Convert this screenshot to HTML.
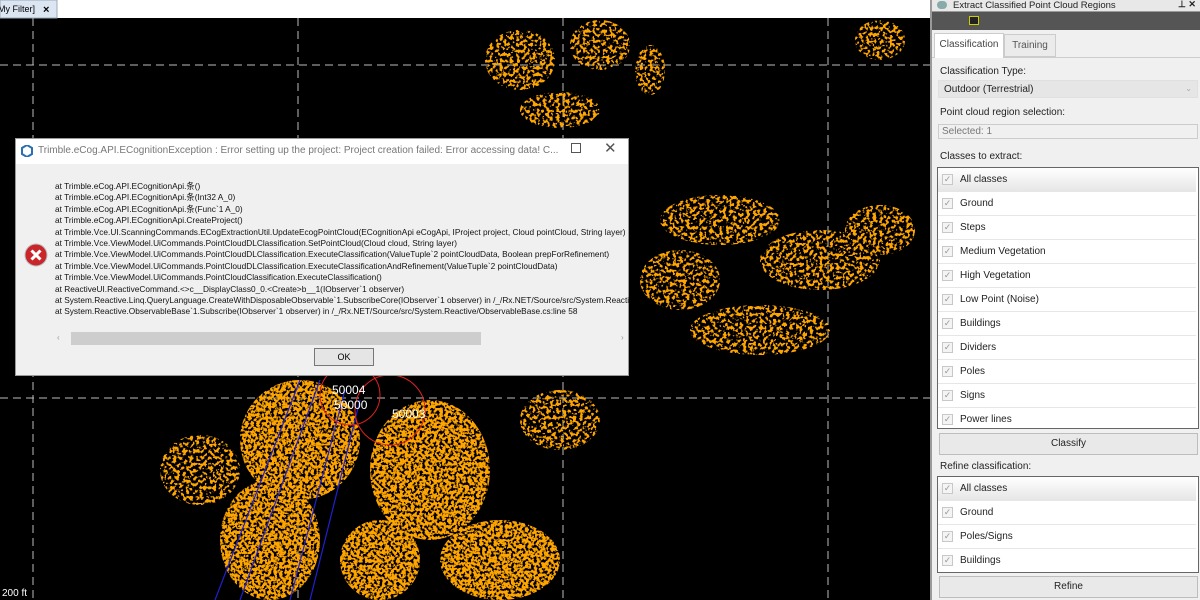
<!DOCTYPE html>
<html><head><meta charset="utf-8"><style>
*{margin:0;padding:0;box-sizing:border-box}
body{width:1200px;height:600px;overflow:hidden;background:#000;font-family:"Liberation Sans",sans-serif;position:relative}
.abs{position:absolute}
.panel{left:930px;top:0;width:270px;height:600px;background:#f0f0f0;border-left:2px solid #9a9a9a;font-size:10px;color:#222}
.row{position:absolute;left:0;width:258px;height:24px;border-bottom:1px solid #e6e6e6;background:#fff}
.row .cb{position:absolute;left:4px;top:6px;width:11px;height:11px;border:1px solid #c8c8c8;background:#f4f4f4;color:#999;font-size:9px;line-height:9px;text-align:center}
.row span{position:absolute;left:22px;top:6px}
.btn{position:absolute;left:7px;width:259px;height:22px;border:1px solid #bdbdbd;background:#e9e9e9;text-align:center;line-height:20px}
.dlg{left:15px;top:138px;width:614px;height:238px;background:#f0f0f0;border:1px solid #999}
.dlg pre{position:absolute;left:39px;top:42px;font-family:"Liberation Sans","Noto Sans CJK SC",sans-serif;font-size:8.3px;line-height:11.4px;color:#111;white-space:pre;overflow:hidden;width:574px}
</style></head><body>
<svg class="abs" style="left:0;top:0" width="930" height="600">
<defs>
<filter id="sp" x="0" y="0" width="100%" height="100%">
<feTurbulence type="fractalNoise" baseFrequency="0.35" numOctaves="2" seed="3" result="n"/>
<feColorMatrix in="n" type="matrix" values="0 0 0 0 0  0 0 0 0 0  0 0 0 0 0  0 0 0 -9 5.4" result="m"/>
<feComposite in="SourceGraphic" in2="m" operator="in"/>
</filter>
<filter id="sp2" x="0" y="0" width="100%" height="100%">
<feTurbulence type="fractalNoise" baseFrequency="0.3" numOctaves="2" seed="7" result="n"/>
<feColorMatrix in="n" type="matrix" values="0 0 0 0 0  0 0 0 0 0  0 0 0 0 0  0 0 0 -12 6" result="m"/>
<feComposite in="SourceGraphic" in2="m" operator="in"/>
</filter>
</defs>
<rect x="0" y="0" width="930" height="18" fill="#fff"/>
<rect x="0" y="0" width="57" height="18" fill="#dce6f2" stroke="#9ab" />
<text x="-2" y="12" font-size="9" font-family="Liberation Sans">My Filter]</text>
<text x="43" y="13" font-size="11" font-weight="bold" font-family="Liberation Sans">×</text>
<g stroke="#bbb" stroke-dasharray="8 5" stroke-width="1">
<line x1="33" y1="18" x2="33" y2="600"/><line x1="298" y1="18" x2="298" y2="600"/>
<line x1="563" y1="18" x2="563" y2="600"/><line x1="828" y1="18" x2="828" y2="600"/>
<line x1="0" y1="65" x2="930" y2="65"/><line x1="0" y1="398" x2="930" y2="398"/>
</g>
<g fill="#ffa500" filter="url(#sp2)">
<ellipse cx="520" cy="60" rx="35" ry="30"/><ellipse cx="600" cy="45" rx="30" ry="25"/>
<ellipse cx="560" cy="110" rx="40" ry="18"/><ellipse cx="650" cy="70" rx="15" ry="25"/>
<ellipse cx="720" cy="220" rx="60" ry="25"/><ellipse cx="820" cy="260" rx="60" ry="30"/>
<ellipse cx="680" cy="280" rx="40" ry="30"/><ellipse cx="880" cy="230" rx="35" ry="25"/>
<ellipse cx="760" cy="330" rx="70" ry="25"/><ellipse cx="880" cy="40" rx="25" ry="20"/>
<ellipse cx="560" cy="420" rx="40" ry="30"/><ellipse cx="200" cy="470" rx="40" ry="35"/>
</g>
<g fill="#ffa500" filter="url(#sp)">
<ellipse cx="300" cy="440" rx="60" ry="60"/><ellipse cx="430" cy="470" rx="60" ry="70"/>
<ellipse cx="270" cy="540" rx="50" ry="60"/><ellipse cx="500" cy="560" rx="60" ry="40"/>
<ellipse cx="380" cy="560" rx="40" ry="40"/>
</g>
<g stroke="#2020d0" stroke-width="1.2" fill="none">
<line x1="300" y1="380" x2="215" y2="600"/><line x1="320" y1="380" x2="240" y2="600"/>
<line x1="345" y1="390" x2="290" y2="600"/><line x1="360" y1="400" x2="310" y2="600"/>
</g>
<g stroke="#e02020" fill="none"><circle cx="350" cy="395" r="30"/><circle cx="390" cy="410" r="35"/></g>
<text x="332" y="394" fill="#fff" font-size="12" font-family="Liberation Sans">50004</text>
<text x="334" y="409" fill="#fff" font-size="12" font-family="Liberation Sans">50000</text>
<text x="392" y="418" fill="#fff" font-size="12" font-family="Liberation Sans">50003</text>
<text x="2" y="596" fill="#fff" font-size="10" font-family="Liberation Sans">200 ft</text>
</svg>

<div class="abs dlg">
<div class="abs" style="left:0;top:0;width:612px;height:25px;background:#fff"></div>
<svg class="abs" style="left:5px;top:6px" width="12" height="12"><polygon points="6,0 11,3 11,9 6,12 1,9 1,3" fill="none" stroke="#2a6fb0" stroke-width="2"/></svg>
<div class="abs" style="left:22px;top:6px;font-size:10px;color:#777;white-space:nowrap">Trimble.eCog.API.ECognitionException : Error setting up the project: Project creation failed: Error accessing data! C...</div>
<div class="abs" style="left:555px;top:4px;width:10px;height:10px;border:1px solid #555"></div>
<div class="abs" style="left:588px;top:0px;font-size:15px;color:#555">✕</div>
<svg class="abs" style="left:8px;top:104px" width="24" height="24"><circle cx="12" cy="12" r="11" fill="#c8262a" stroke="#bbb"/><path d="M7.5 7.5L16.5 16.5M16.5 7.5L7.5 16.5" stroke="#fff" stroke-width="3"/></svg>
<pre>at Trimble.eCog.API.ECognitionApi.&#x6761;()
at Trimble.eCog.API.ECognitionApi.&#x6761;(Int32 A_0)
at Trimble.eCog.API.ECognitionApi.&#x6761;(Func`1 A_0)
at Trimble.eCog.API.ECognitionApi.CreateProject()
at Trimble.Vce.UI.ScanningCommands.ECogExtractionUtil.UpdateEcogPointCloud(ECognitionApi eCogApi, IProject project, Cloud pointCloud, String layer)
at Trimble.Vce.ViewModel.UiCommands.PointCloudDLClassification.SetPointCloud(Cloud cloud, String layer)
at Trimble.Vce.ViewModel.UiCommands.PointCloudDLClassification.ExecuteClassification(ValueTuple`2 pointCloudData, Boolean prepForRefinement)
at Trimble.Vce.ViewModel.UiCommands.PointCloudDLClassification.ExecuteClassificationAndRefinement(ValueTuple`2 pointCloudData)
at Trimble.Vce.ViewModel.UiCommands.PointCloudClassification.ExecuteClassification()
at ReactiveUI.ReactiveCommand.&lt;&gt;c__DisplayClass0_0.&lt;Create&gt;b__1(IObserver`1 observer)
at System.Reactive.Linq.QueryLanguage.CreateWithDisposableObservable`1.SubscribeCore(IObserver`1 observer) in /_/Rx.NET/Source/src/System.Reactive
at System.Reactive.ObservableBase`1.Subscribe(IObserver`1 observer) in /_/Rx.NET/Source/src/System.Reactive/ObservableBase.cs:line 58</pre>
<div class="abs" style="left:41px;top:194px;font-size:8px;color:#999">‹</div>
<div class="abs" style="left:605px;top:194px;font-size:8px;color:#999">›</div>
<div class="abs" style="left:55px;top:193px;width:410px;height:13px;background:#cdcdcd"></div>
<div class="abs" style="left:298px;top:209px;width:60px;height:18px;border:1px solid #777;background:#e5e5e5;font-size:9px;text-align:center;line-height:16px">OK</div>
</div>

<div class="abs panel">
<div class="abs" style="left:0;top:0;width:268px;height:12px;background:#e8e8e8;border-bottom:1px solid #999"></div>
<div class="abs" style="left:5px;top:1px;width:10px;height:8px;background:#8aa;border-radius:4px"></div>
<div class="abs" style="left:21px;top:0;font-size:9.5px;white-space:nowrap">Extract Classified Point Cloud Regions</div>
<div class="abs" style="left:246px;top:-1px;font-size:9px;font-weight:bold">⊥ ✕</div>
<div class="abs" style="left:0;top:12px;width:268px;height:18px;background:#555"></div>
<div class="abs" style="left:37px;top:16px;width:10px;height:9px;background:#222;border:1px solid #cc0"></div>
<div class="abs" style="left:0;top:57px;width:268px;height:1px;background:#ccc"></div>
<div class="abs" style="left:2px;top:33px;width:70px;height:25px;background:#fff;border:1px solid #ccc;border-bottom:none;text-align:center;line-height:22px;color:#444">Classification</div>
<div class="abs" style="left:72px;top:34px;width:52px;height:23px;background:#ebebeb;border:1px solid #ccc;text-align:center;line-height:22px;color:#555">Training</div>
<div class="abs" style="left:8px;top:66px">Classification Type:</div>
<div class="abs" style="left:6px;top:80px;width:260px;height:18px;background:#e6e6e6;border:1px solid #e0e0e0;padding:3px 5px">Outdoor (Terrestrial)<span style="float:right;color:#aaa;font-size:8px">⌄</span></div>
<div class="abs" style="left:8px;top:107px">Point cloud region selection:</div>
<div class="abs" style="left:6px;top:124px;width:260px;height:15px;background:#f0f0f0;border:1px solid #ccc;padding:1px 3px;color:#777">Selected: 1</div>
<div class="abs" style="left:8px;top:151px">Classes to extract:</div>
<div class="abs" style="left:5px;top:167px;width:262px;height:262px;border:1px solid #666;background:#fff;overflow:hidden">
<div class="row" style="top:0;background:linear-gradient(#fff,#e6e6e6)"><div class="cb">✓</div><span>All classes</span></div>
<div class="row" style="top:24px"><div class="cb">✓</div><span>Ground</span></div>
<div class="row" style="top:48px"><div class="cb">✓</div><span>Steps</span></div>
<div class="row" style="top:72px"><div class="cb">✓</div><span>Medium Vegetation</span></div>
<div class="row" style="top:96px"><div class="cb">✓</div><span>High Vegetation</span></div>
<div class="row" style="top:120px"><div class="cb">✓</div><span>Low Point (Noise)</span></div>
<div class="row" style="top:144px"><div class="cb">✓</div><span>Buildings</span></div>
<div class="row" style="top:168px"><div class="cb">✓</div><span>Dividers</span></div>
<div class="row" style="top:192px"><div class="cb">✓</div><span>Poles</span></div>
<div class="row" style="top:216px"><div class="cb">✓</div><span>Signs</span></div>
<div class="row" style="top:240px;border:none"><div class="cb">✓</div><span>Power lines</span></div>
</div>
<div class="btn" style="top:433px">Classify</div>
<div class="abs" style="left:8px;top:461px">Refine classification:</div>
<div class="abs" style="left:5px;top:476px;width:262px;height:97px;border:1px solid #666;background:#fff;overflow:hidden">
<div class="row" style="top:0;background:linear-gradient(#fff,#e6e6e6)"><div class="cb">✓</div><span>All classes</span></div>
<div class="row" style="top:24px"><div class="cb">✓</div><span>Ground</span></div>
<div class="row" style="top:48px"><div class="cb">✓</div><span>Poles/Signs</span></div>
<div class="row" style="top:72px;border:none"><div class="cb">✓</div><span>Buildings</span></div>
</div>
<div class="btn" style="top:576px">Refine</div>
</div>
</body></html>
